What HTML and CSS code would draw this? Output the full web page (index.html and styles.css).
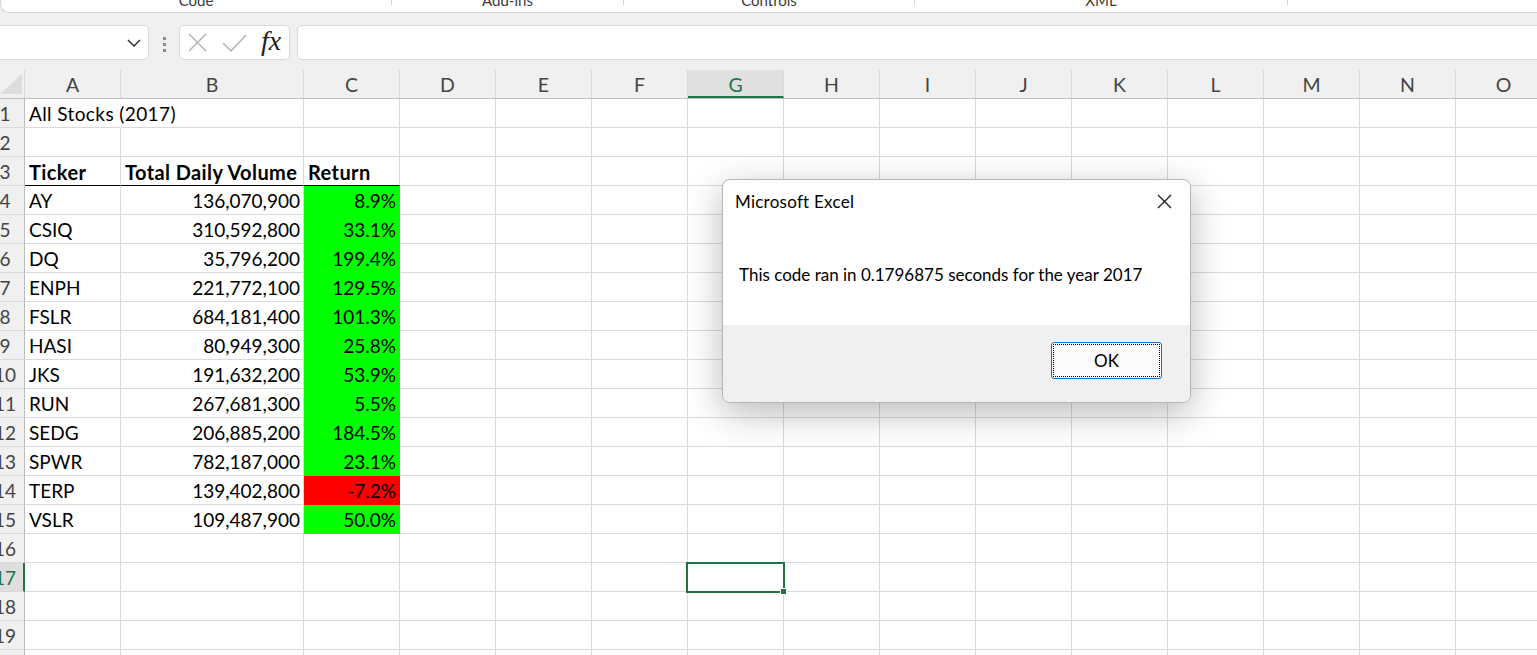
FILE: index.html
```html
<!DOCTYPE html>
<html>
<head>
<meta charset="utf-8">
<link rel="stylesheet" href="styles.css">
</head>
<body>
<div class="ribbon">
  <div class="grp g-code"><span>Code</span></div>
  <div class="grp g-addins"><span>Add-ins</span></div>
  <div class="grp g-controls"><span>Controls</span></div>
  <div class="grp g-xml"><span>XML</span></div>
  <div class="grp g-rest"></div>
</div>

<div class="fbar">
  <div class="namebox">
    <svg width="14" height="8" viewBox="0 0 14 8"><path d="M1 1l6 6 6-6" fill="none" stroke="#333" stroke-width="1.5"/></svg>
  </div>
  <div class="grip"><i></i><i></i><i></i></div>
  <div class="fbtns">
    <svg class="ic-x" width="19" height="19" viewBox="0 0 19 19"><path d="M1 1L18 18M18 1L1 18" fill="none" stroke="#b3b3b3" stroke-width="1.5"/></svg>
    <svg class="ic-ok" width="25" height="18" viewBox="0 0 25 18"><path d="M1 9l8 8L24 1" fill="none" stroke="#b3b3b3" stroke-width="1.5"/></svg>
    <span class="fx">fx</span>
  </div>
  <div class="finput"></div>
</div>

<div class="sheet">
  <div class="hrow">
    <div class="corner"><svg width="22" height="20" viewBox="0 0 22 20"><polygon points="22,0 22,20 0,20" fill="#dcdcdc"/></svg></div>
    <div class="ch">A</div><div class="ch cb">B</div><div class="ch">C</div><div class="ch">D</div><div class="ch">E</div><div class="ch">F</div><div class="ch ch-sel">G</div><div class="ch">H</div><div class="ch">I</div><div class="ch">J</div><div class="ch">K</div><div class="ch">L</div><div class="ch">M</div><div class="ch">N</div><div class="ch">O</div>
  </div>

  <div class="r"><div class="rh"><span>1</span></div><div class="c ov">All Stocks (2017)</div><div class="c cb"></div><div class="c"></div><div class="c"></div><div class="c"></div><div class="c"></div><div class="c"></div><div class="c"></div><div class="c"></div><div class="c"></div><div class="c"></div><div class="c"></div><div class="c"></div><div class="c"></div><div class="c"></div></div>
  <div class="r"><div class="rh"><span>2</span></div><div class="c"></div><div class="c cb"></div><div class="c"></div><div class="c"></div><div class="c"></div><div class="c"></div><div class="c"></div><div class="c"></div><div class="c"></div><div class="c"></div><div class="c"></div><div class="c"></div><div class="c"></div><div class="c"></div><div class="c"></div></div>
  <div class="r"><div class="rh"><span>3</span></div><div class="c hd">Ticker</div><div class="c cb hd">Total Daily Volume</div><div class="c hd">Return</div><div class="c"></div><div class="c"></div><div class="c"></div><div class="c"></div><div class="c"></div><div class="c"></div><div class="c"></div><div class="c"></div><div class="c"></div><div class="c"></div><div class="c"></div><div class="c"></div></div>
  <div class="r"><div class="rh"><span>4</span></div><div class="c">AY</div><div class="c cb num">136,070,900</div><div class="c num pos">8.9%</div><div class="c"></div><div class="c"></div><div class="c"></div><div class="c"></div><div class="c"></div><div class="c"></div><div class="c"></div><div class="c"></div><div class="c"></div><div class="c"></div><div class="c"></div><div class="c"></div></div>
  <div class="r"><div class="rh"><span>5</span></div><div class="c">CSIQ</div><div class="c cb num">310,592,800</div><div class="c num pos">33.1%</div><div class="c"></div><div class="c"></div><div class="c"></div><div class="c"></div><div class="c"></div><div class="c"></div><div class="c"></div><div class="c"></div><div class="c"></div><div class="c"></div><div class="c"></div><div class="c"></div></div>
  <div class="r"><div class="rh"><span>6</span></div><div class="c">DQ</div><div class="c cb num">35,796,200</div><div class="c num pos">199.4%</div><div class="c"></div><div class="c"></div><div class="c"></div><div class="c"></div><div class="c"></div><div class="c"></div><div class="c"></div><div class="c"></div><div class="c"></div><div class="c"></div><div class="c"></div><div class="c"></div></div>
  <div class="r"><div class="rh"><span>7</span></div><div class="c">ENPH</div><div class="c cb num">221,772,100</div><div class="c num pos">129.5%</div><div class="c"></div><div class="c"></div><div class="c"></div><div class="c"></div><div class="c"></div><div class="c"></div><div class="c"></div><div class="c"></div><div class="c"></div><div class="c"></div><div class="c"></div><div class="c"></div></div>
  <div class="r"><div class="rh"><span>8</span></div><div class="c">FSLR</div><div class="c cb num">684,181,400</div><div class="c num pos">101.3%</div><div class="c"></div><div class="c"></div><div class="c"></div><div class="c"></div><div class="c"></div><div class="c"></div><div class="c"></div><div class="c"></div><div class="c"></div><div class="c"></div><div class="c"></div><div class="c"></div></div>
  <div class="r"><div class="rh"><span>9</span></div><div class="c">HASI</div><div class="c cb num">80,949,300</div><div class="c num pos">25.8%</div><div class="c"></div><div class="c"></div><div class="c"></div><div class="c"></div><div class="c"></div><div class="c"></div><div class="c"></div><div class="c"></div><div class="c"></div><div class="c"></div><div class="c"></div><div class="c"></div></div>
  <div class="r"><div class="rh"><span>10</span></div><div class="c">JKS</div><div class="c cb num">191,632,200</div><div class="c num pos">53.9%</div><div class="c"></div><div class="c"></div><div class="c"></div><div class="c"></div><div class="c"></div><div class="c"></div><div class="c"></div><div class="c"></div><div class="c"></div><div class="c"></div><div class="c"></div><div class="c"></div></div>
  <div class="r"><div class="rh"><span>11</span></div><div class="c">RUN</div><div class="c cb num">267,681,300</div><div class="c num pos">5.5%</div><div class="c"></div><div class="c"></div><div class="c"></div><div class="c"></div><div class="c"></div><div class="c"></div><div class="c"></div><div class="c"></div><div class="c"></div><div class="c"></div><div class="c"></div><div class="c"></div></div>
  <div class="r"><div class="rh"><span>12</span></div><div class="c">SEDG</div><div class="c cb num">206,885,200</div><div class="c num pos">184.5%</div><div class="c"></div><div class="c"></div><div class="c"></div><div class="c"></div><div class="c"></div><div class="c"></div><div class="c"></div><div class="c"></div><div class="c"></div><div class="c"></div><div class="c"></div><div class="c"></div></div>
  <div class="r"><div class="rh"><span>13</span></div><div class="c">SPWR</div><div class="c cb num">782,187,000</div><div class="c num pos">23.1%</div><div class="c"></div><div class="c"></div><div class="c"></div><div class="c"></div><div class="c"></div><div class="c"></div><div class="c"></div><div class="c"></div><div class="c"></div><div class="c"></div><div class="c"></div><div class="c"></div></div>
  <div class="r"><div class="rh"><span>14</span></div><div class="c">TERP</div><div class="c cb num">139,402,800</div><div class="c num neg">-7.2%</div><div class="c"></div><div class="c"></div><div class="c"></div><div class="c"></div><div class="c"></div><div class="c"></div><div class="c"></div><div class="c"></div><div class="c"></div><div class="c"></div><div class="c"></div><div class="c"></div></div>
  <div class="r"><div class="rh"><span>15</span></div><div class="c">VSLR</div><div class="c cb num">109,487,900</div><div class="c num pos">50.0%</div><div class="c"></div><div class="c"></div><div class="c"></div><div class="c"></div><div class="c"></div><div class="c"></div><div class="c"></div><div class="c"></div><div class="c"></div><div class="c"></div><div class="c"></div><div class="c"></div></div>
  <div class="r"><div class="rh"><span>16</span></div><div class="c"></div><div class="c cb"></div><div class="c"></div><div class="c"></div><div class="c"></div><div class="c"></div><div class="c"></div><div class="c"></div><div class="c"></div><div class="c"></div><div class="c"></div><div class="c"></div><div class="c"></div><div class="c"></div><div class="c"></div></div>
  <div class="r"><div class="rh rh-sel"><span>17</span></div><div class="c"></div><div class="c cb"></div><div class="c"></div><div class="c"></div><div class="c"></div><div class="c"></div><div class="c active"><div class="selbox"><i class="handle"></i></div></div><div class="c"></div><div class="c"></div><div class="c"></div><div class="c"></div><div class="c"></div><div class="c"></div><div class="c"></div><div class="c"></div></div>
  <div class="r"><div class="rh"><span>18</span></div><div class="c"></div><div class="c cb"></div><div class="c"></div><div class="c"></div><div class="c"></div><div class="c"></div><div class="c"></div><div class="c"></div><div class="c"></div><div class="c"></div><div class="c"></div><div class="c"></div><div class="c"></div><div class="c"></div><div class="c"></div></div>
  <div class="r"><div class="rh"><span>19</span></div><div class="c"></div><div class="c cb"></div><div class="c"></div><div class="c"></div><div class="c"></div><div class="c"></div><div class="c"></div><div class="c"></div><div class="c"></div><div class="c"></div><div class="c"></div><div class="c"></div><div class="c"></div><div class="c"></div><div class="c"></div></div>
  <div class="r"><div class="rh"><span>20</span></div><div class="c"></div><div class="c cb"></div><div class="c"></div><div class="c"></div><div class="c"></div><div class="c"></div><div class="c"></div><div class="c"></div><div class="c"></div><div class="c"></div><div class="c"></div><div class="c"></div><div class="c"></div><div class="c"></div><div class="c"></div></div>
</div>

<div class="dlg">
  <div class="dlg-title">
    <span>Microsoft Excel</span>
    <svg width="15" height="15" viewBox="0 0 15 15"><path d="M1 1L14 14M14 1L1 14" fill="none" stroke="#1a1a1a" stroke-width="1.3"/></svg>
  </div>
  <div class="dlg-body">This code ran in 0.1796875 seconds for the year 2017</div>
  <div class="dlg-foot">
    <div class="btn"><span>OK</span></div>
  </div>
</div>
</body>
</html>
```

FILE: styles.css
```css
* { box-sizing: border-box; }
html, body { margin: 0; padding: 0; }
body {
  width: 1537px;
  height: 655px;
  overflow: hidden;
  background: #f0f0f0;
  font-family: Lato, "Liberation Sans", sans-serif;
  position: relative;
}

/* ribbon strip */
.ribbon {
  height: 13px;
  background: #fff;
  border-bottom: 1px solid #d4d4d4;
  border-left: 1px solid #d4d4d4;
  border-bottom-left-radius: 9px;
  display: flex;
  overflow: hidden;
}
.grp {
  height: 5px;
  border-right: 1px solid #d4d4d4;
  display: flex;
  justify-content: center;
  align-items: flex-end;
  flex: none;
}
.grp span {
  font-family: Lato, sans-serif;
  font-size: 15px;
  line-height: 15px;
  margin-bottom: -3px;
  color: #3c3c3c;
}
.g-code { width: 391px; }
.g-addins { width: 232px; }
.g-controls { width: 291px; }
.g-xml { width: 373px; }
.g-rest { flex: 1; border-right: none; }

/* formula bar */
.fbar {
  display: flex;
  height: 35px;
  margin-top: 12px;
}
.namebox {
  width: 155px;
  margin-left: -6px;
  background: #fff;
  border: 1px solid #d9d9d9;
  border-radius: 5px;
  display: flex;
  align-items: center;
  justify-content: flex-end;
  padding-right: 7px;
}
.grip {
  width: 30px;
  display: flex;
  flex-direction: column;
  align-items: center;
  justify-content: center;
  gap: 3px;
  padding-top: 3px;
}
.grip i {
  display: block;
  width: 3px;
  height: 3px;
  background: #8c8c8c;
}
.fbtns {
  width: 111px;
  background: #fff;
  border: 1px solid #d9d9d9;
  border-radius: 5px;
  display: flex;
  align-items: center;
  padding-left: 8px;
}
.ic-ok { margin-left: 15px; margin-top: 1px; }
.fx {
  margin-left: 14px;
  font-family: "Liberation Serif", serif;
  font-style: italic;
  font-size: 28px;
  line-height: 28px;
  color: #222;
  margin-top: -3px;
}
.finput {
  flex: 1;
  margin-left: 7px;
  margin-right: -10px;
  background: #fff;
  border: 1px solid #d9d9d9;
  border-radius: 5px;
}

/* sheet */
.sheet { margin-top: 10px; }
.hrow {
  display: flex;
  height: 29px;
  border-bottom: 1px solid #bfbfbf;
}
.corner {
  width: 25px;
  flex: none;
  border-right: 1px solid #dadada;
  display: flex;
  align-items: flex-end;
  justify-content: flex-start;
  padding-bottom: 4px;
}
.ch {
  width: 96px;
  flex: none;
  border-right: 1px solid #dadada;
  text-align: center;
  font-size: 19.5px;
  line-height: 26px;
  padding-top: 2px;
  color: #444;
}
.ch.cb { width: 183px; }
.ch-sel {
  background: #e0e0e0;
  color: #217346;
  border-bottom: 2px solid #217346;
}

.r {
  display: flex;
  height: 29px;
  background: #fff;
}
.rh {
  width: 25px;
  flex: none;
  background: #f0f0f0;
  border-right: 1px solid #bdbdbd;
  border-bottom: 1px solid #dadada;
  overflow: hidden;
}
.rh span {
  display: block;
  width: 38px;
  margin-left: -14px;
  text-align: center;
  font-size: 19px;
  line-height: 26px;
  padding-top: 2px;
  color: #444;
}
.rh-sel {
  background: #dedede;
  border-right: 2px solid #217346;
}
.rh-sel span { color: #217346; }

.c {
  width: 96px;
  flex: none;
  border-right: 1px solid #dadada;
  border-bottom: 1px solid #dadada;
  font-size: 19px;
  line-height: 26px;
  padding: 2px 3px 0 4px;
  white-space: nowrap;
  overflow: hidden;
  color: #000;
}
.c.cb { width: 183px; }
.c.ov { overflow: visible; border-right-color: #fff; letter-spacing: 0.4px; }
.c.hd {
  font-weight: bold;
  font-size: 20px;
  letter-spacing: 0.4px;
  border-bottom-color: #000;
}
.c.num { text-align: right; }
.c.pos { background: #00ff00; border-color: #00ff00; }
.c.neg { background: #ff0000; border-color: #ff0000; }
.c.active { position: relative; overflow: visible; }
.selbox {
  position: absolute;
  left: -2px;
  top: -1px;
  width: 99px;
  height: 31px;
  border: 2px solid #217346;
  z-index: 2;
}
.handle {
  position: absolute;
  right: -4px;
  bottom: -4px;
  width: 7px;
  height: 7px;
  background: #217346;
  border: 1px solid #fff;
}

/* dialog */
.dlg {
  position: absolute;
  left: 722px;
  top: 179px;
  width: 469px;
  height: 224px;
  background: #fff;
  border: 1px solid #b5b5b5;
  border-radius: 8px;
  box-shadow: 0 10px 36px rgba(0, 0, 0, 0.28);
  overflow: hidden;
  display: flex;
  flex-direction: column;
  font-family: Lato, "Liberation Sans", sans-serif;
  color: #000;
  z-index: 5;
}
.dlg-title {
  height: 44px;
  flex: none;
  display: flex;
  align-items: center;
  justify-content: space-between;
  padding-left: 12px;
  padding-right: 18px;
  padding-bottom: 1px;
  font-size: 17px;
  letter-spacing: 0.25px;
}
.dlg-title svg { margin-top: 0; }
.dlg-body {
  flex: 1;
  padding-left: 16px;
  padding-top: 41px;
  font-size: 17px;
  line-height: 20px;
}
.dlg-foot {
  height: 77px;
  flex: none;
  background: #f0f0f0;
  display: flex;
  justify-content: flex-end;
  align-items: flex-start;
  padding-top: 17px;
  padding-right: 28px;
}
.btn {
  width: 111px;
  height: 37px;
  border: 1px solid #0078d4;
  border-radius: 3px;
  background: #fbfbfb;
  padding: 1px;
}
.btn span {
  display: flex;
  height: 100%;
  align-items: center;
  justify-content: center;
  border: 1px dotted #000;
  font-size: 17px;
}
```
